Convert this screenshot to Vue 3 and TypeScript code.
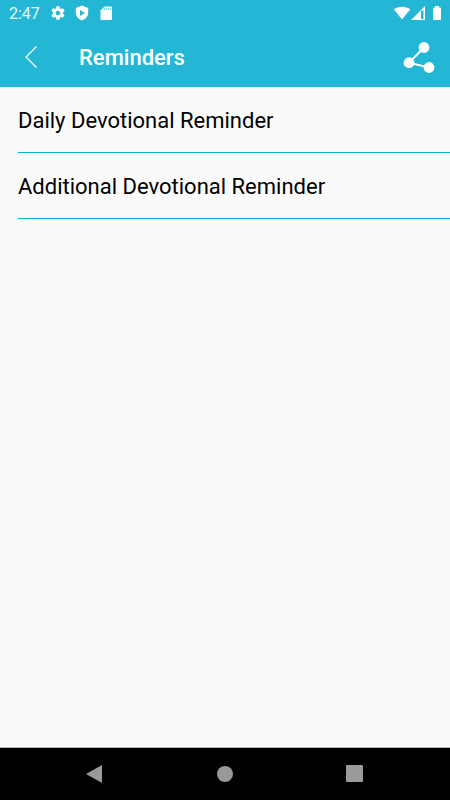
<script setup lang="ts">
interface Reminder {
  id: string
  label: string
}

const reminders: Reminder[] = [
  { id: 'daily', label: 'Daily Devotional Reminder' },
  { id: 'additional', label: 'Additional Devotional Reminder' },
]
</script>

<template>
  <div class="screen">
    <header class="top">
      <div class="status">
        <span class="clock">2:47</span>
        <div class="status-left">
          <svg width="16" height="16" viewBox="0 0 24 24" aria-hidden="true">
            <path
              fill="#fff"
              fill-rule="evenodd"
              d="M19.43 12.98c.04-.32.07-.64.07-.98s-.03-.66-.07-.98l2.11-1.65c.19-.15.24-.42.12-.64l-2-3.46c-.12-.22-.39-.3-.61-.22l-2.49 1c-.52-.4-1.08-.73-1.69-.98l-.38-2.65C14.46 2.18 14.25 2 14 2h-4c-.25 0-.46.18-.49.42l-.38 2.65c-.61.25-1.17.59-1.69.98l-2.49-1c-.23-.09-.49 0-.61.22l-2 3.46c-.13.22-.07.49.12.64l2.11 1.65c-.04.32-.07.65-.07.98s.03.66.07.98l-2.11 1.65c-.19.15-.24.42-.12.64l2 3.46c.12.22.39.3.61.22l2.49-1c.52.4 1.08.73 1.69.98l.38 2.65c.03.24.24.42.49.42h4c.25 0 .46-.18.49-.42l.38-2.65c.61-.25 1.17-.59 1.69-.98l2.49 1c.23.09.49 0 .61-.22l2-3.46c.12-.22.07-.49-.12-.64l-2.11-1.65zM12 15.5c-1.93 0-3.5-1.57-3.5-3.5s1.57-3.5 3.5-3.5 3.5 1.57 3.5 3.5-1.57 3.5-3.5 3.5z"
            />
          </svg>
          <svg width="16" height="16" viewBox="0 0 16 16" aria-hidden="true">
            <path fill="#fff" fill-rule="evenodd" d="M8 .5 14.2 3v4.600c0 3.700-2.600 6.700-6.200 7.900-3.600-1.200-6.200-4.200-6.200-7.900V3zM6 5v6l5-3z" />
          </svg>
          <svg width="16" height="16" viewBox="0 0 16 16" aria-hidden="true">
            <path fill="#fff" d="M6.500 1.500h6.200q1.300 0 1.300 1.300v10.900q0 1.300-1.300 1.300H3.800q-1.300 0-1.300-1.300V5.500z" />
            <path stroke="#23b7d5" stroke-opacity=".6" d="M6.500 3v2M8.500 3v2M10.500 3v2M12.500 3v2" />
          </svg>
        </div>
        <svg class="signals" width="50" height="16" viewBox="0 0 50 16" aria-hidden="true">
          <path fill="#fff" d="M.800 4.200C5.200.800 12.800.800 17.200 4.200L9 14.500z" />
          <path fill="#fff" fill-rule="evenodd" d="M32 1v14H18zM28 5.500V14h2.500V5.500z" />
          <path fill="#fff" d="M42 1h4v1.500h1q1 0 1 1V14q0 1-1 1h-6q-1 0-1-1V3.500q0-1 1-1h1z" />
        </svg>
      </div>
      <div class="bar">
        <button class="icon-button" type="button" aria-label="Back">
          <svg width="14" height="24" viewBox="0 1 14 24" aria-hidden="true">
            <path d="M12.500 1.500 2 12l10.500 10.500" fill="none" stroke="#fff" stroke-width="1.200" />
          </svg>
        </button>
        <h1>Reminders</h1>
        <button class="icon-button share" type="button" aria-label="Share">
          <svg width="32" height="32" viewBox="0 1 32 32" aria-hidden="true">
            <path d="M21 6.500 6 21.700 26 26.500" fill="none" stroke="#fff" stroke-width="2" />
            <g fill="#fff">
              <circle cx="21" cy="6.500" r="5.400" />
              <circle cx="6" cy="21.700" r="5.400" />
              <circle cx="26" cy="26.500" r="5.400" />
            </g>
          </svg>
        </button>
      </div>
    </header>
    <main>
      <ul class="list">
        <li v-for="item in reminders" :key="item.id">
          <button class="row" type="button">{{ item.label }}</button>
        </li>
      </ul>
    </main>
    <nav class="system-nav" aria-label="System navigation">
      <button class="icon-button" type="button" aria-label="Previous screen">
        <svg width="18" height="20" viewBox="0 0 18 20" aria-hidden="true">
          <path fill="#999" d="M0 10 16 1v18z" />
        </svg>
      </button>
      <button class="icon-button" type="button" aria-label="Home">
        <svg width="18" height="18" viewBox="0 0 18 18" aria-hidden="true">
          <circle cx="9" cy="9" r="8" fill="#999" />
        </svg>
      </button>
      <button class="icon-button" type="button" aria-label="Recent apps">
        <svg width="18" height="18" viewBox="0 0 18 18" aria-hidden="true">
          <rect x="0" y="0" width="17" height="17" rx="1" fill="#999" />
        </svg>
      </button>
    </nav>
  </div>
</template>

<style>
body {
  margin: 0;
}
</style>

<style scoped>
.screen {
  display: flex;
  flex-direction: column;
  min-height: 100vh;
  background: #fafafa;
  font-family: Roboto, "Liberation Sans", sans-serif;
}
.top {
  background: #23b7d5;
  color: #fff;
}
.status {
  display: flex;
  align-items: center;
  height: 28px;
  padding: 0 7px 0 9px;
}
.clock {
  width: 41px;
  font-size: 16px;
  line-height: 28px;
  opacity: 0.9;
}
.status-left {
  display: flex;
  gap: 8px;
}
.status svg {
  display: block;
  margin-bottom: 2px;
}
.status .signals {
  margin-left: auto;
}
.bar {
  display: flex;
  align-items: center;
  height: 59px;
  padding: 0 15px 0 24px;
}
.icon-button {
  display: flex;
  align-items: center;
  justify-content: center;
  padding: 0;
  border: 0;
  background: none;
}
h1 {
  margin: 0 0 0 41px;
  padding-top: 1px;
  font-size: 22px;
  font-weight: 500;
  line-height: 28px;
}
.share {
  margin-left: auto;
}
main {
  flex: 1;
}
.list {
  margin: 0;
  padding: 0 0 0 18px;
  list-style: none;
}
.row {
  display: block;
  width: 100%;
  height: 66px;
  padding: 2px 0 0;
  border: 0;
  border-bottom: 1px solid #0cb0d0;
  background: none;
  color: #000;
  font-family: inherit;
  font-size: 22px;
  line-height: 28px;
  text-align: left;
}
.system-nav {
  display: flex;
  align-items: center;
  justify-content: center;
  gap: 112px;
  height: 52px;
  border-top: 1px solid #b4b4b4;
  background: #000;
}
</style>
